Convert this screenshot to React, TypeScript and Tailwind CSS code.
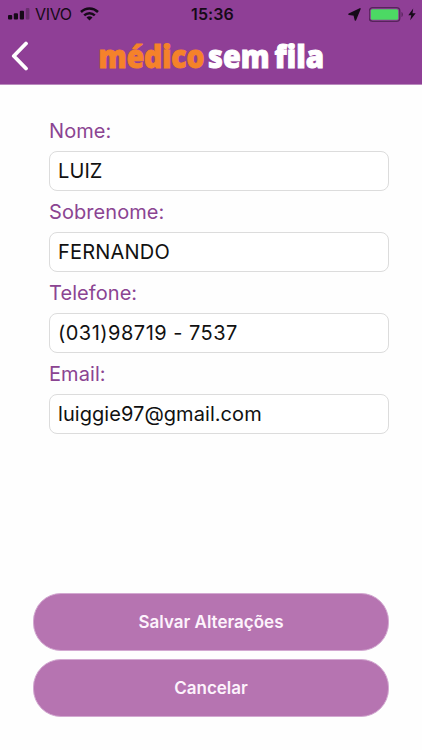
import React, { useState } from 'react';

const initialFields = [
  { name: 'nome', label: 'Nome:', type: 'text', value: 'LUIZ', inputClass: 'tracking-[0.1px]' },
  { name: 'sobrenome', label: 'Sobrenome:', type: 'text', value: 'FERNANDO', inputClass: 'tracking-[0.2px]' },
  { name: 'telefone', label: 'Telefone:', type: 'tel', value: '(031)98719 - 7537', inputClass: 'tracking-[0.48px]' },
  { name: 'email', label: 'Email:', type: 'email', value: 'luiggie97@gmail.com', inputClass: 'tracking-[0.06px]' },
];

function StatusBar() {
  return (
    <div className="grid h-7 grid-cols-[1fr_auto_1fr] items-center pl-2 pr-[6px] text-[#160a18]">
      <div className="flex items-center">
        <svg width="22" height="12" viewBox="0 0 22 12" fill="currentColor">
          <rect x="0" y="7" width="4.2" height="4.5" rx="1" />
          <rect x="5.8" y="5.2" width="4.2" height="6.3" rx="1" />
          <rect x="11.8" y="2.7" width="4.2" height="8.8" rx="1" />
          <rect x="17.8" y="0" width="3.6" height="11.5" rx="1" opacity="0.3" />
        </svg>
        <span className="ml-[5px] text-[16px] leading-none tracking-[-0.35px]">VIVO</span>
        <svg className="ml-2" width="19" height="14" viewBox="0 0 19 14">
          <g fill="none" stroke="currentColor" strokeWidth="2.5">
            <path d="M1 5C5.8.3 13.2.3 18 5" />
            <path d="M4.2 8.3C7.2 5.4 11.8 5.4 14.8 8.3" />
          </g>
          <path d="M6.5 10.5C8.2 8.9 10.8 8.9 12.5 10.5L9.5 13.6Z" fill="currentColor" />
        </svg>
      </div>
      <span className="pl-px text-[16px] font-semibold leading-none tracking-[0.1px]">15:36</span>
      <div className="flex items-center justify-end">
        <svg width="13" height="13" viewBox="0 0 13 13" fill="currentColor">
          <path d="M12 .8 7.4 12 6.2 7 1 6.2Z" stroke="currentColor" strokeWidth="1.5" strokeLinejoin="round" />
        </svg>
        <svg className="ml-2" width="36" height="15" viewBox="0 0 36 15">
          <rect x="0.2" y="0.7" width="30.6" height="13.6" rx="3.4" fill="none" stroke="#57245c" strokeWidth="1.3" />
          <rect x="1.8" y="2.3" width="27.4" height="10.4" rx="1.5" fill="#4cd964" />
          <path d="M32.5 5C34.3 5.5 34.3 9.5 32.5 10Z" fill="#57245c" />
        </svg>
        <svg className="ml-[3px]" width="8" height="13" viewBox="0 0 8 13" fill="currentColor">
          <path d="M5.2.5.3 7.2H3.3L2.2 12.3 7.7 5.2H4.5Z" />
        </svg>
      </div>
    </div>
  );
}

function Logo() {
  return (
    <svg width="232" height="50" viewBox="0 -5 232 50" className="font-['Noto_Sans'] text-[31px] font-black">
      <text y="31.5" strokeWidth="1">
        <tspan x="1.5" textLength="106" lengthAdjust="spacingAndGlyphs" fill="#f5822a" stroke="#f5822a">médico</tspan>
        <tspan x="111" textLength="61.5" lengthAdjust="spacingAndGlyphs" fill="#fff" stroke="#fff">sem</tspan>
        <tspan x="177.5" textLength="49.5" lengthAdjust="spacingAndGlyphs" fill="#fff" stroke="#fff">fila</tspan>
      </text>
    </svg>
  );
}

export default function App() {
  const [fields, setFields] = useState(initialFields);

  const handleChange = (name: string, value: string) => {
    setFields(fields.map((field) => (field.name === name ? { ...field, value } : field)));
  };

  return (
    <div className="flex h-[750px] w-[422px] flex-col overflow-hidden bg-[#fefefe] font-['Inter',sans-serif]">
      <header className="h-[85px] shrink-0 border-b border-[#b98abd] bg-[#8f3f96]">
        <StatusBar />
        <div className="flex h-14 items-center">
          <button type="button" aria-label="Voltar" className="ml-[10px] w-[20px]">
            <svg width="20" height="30" viewBox="0 0 20 30" fill="none" stroke="#fff" strokeWidth="3.8" strokeLinecap="round" strokeLinejoin="round">
              <path d="M16 2.5 3.8 15 16 27.5" />
            </svg>
          </button>
          <div className="ml-[67px]">
            <Logo />
          </div>
        </div>
      </header>

      <form className="flex flex-1 flex-col pb-[33px] pl-[33px] pr-[33px] pt-[25px]">
        <div className="pl-4">
          {fields.map((field) => (
            <div key={field.name} className="h-[81px]">
              <label htmlFor={field.name} className="block h-[41px] text-[20px] leading-[42px] tracking-[0.07px] text-[#8b4492]">
                {field.label}
              </label>
              <input
                id={field.name}
                type={field.type}
                value={field.value}
                onChange={(e) => handleChange(field.name, e.target.value)}
                className={`block h-10 w-full rounded-[8px] border border-[#dcdcdc] bg-white px-2 text-[20px] text-[#111] outline-none ${field.inputClass}`}
              />
            </div>
          ))}
        </div>

        <div className="mt-auto flex flex-col gap-2">
          <button type="button" className="h-[58px] rounded-[28px] border border-[#d3a9d1] bg-[#b674b1] pt-[2px] text-[17px] font-semibold text-[#fdf3fc]">
            Salvar Alterações
          </button>
          <button type="button" className="h-[58px] rounded-[28px] border border-[#d3a9d1] bg-[#b674b1] pt-[2px] text-[17px] font-semibold text-[#fdf3fc]">
            Cancelar
          </button>
        </div>
      </form>
    </div>
  );
}
